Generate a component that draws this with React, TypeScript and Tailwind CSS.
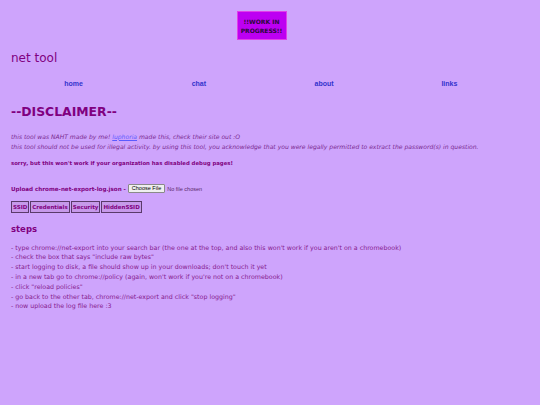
export default function App() {
  const steps = [
    "- type chrome://net-export into your search bar (the one at the top, and also this won't work if you aren't on a chromebook)",
    '- check the box that says "include raw bytes"',
    "- start logging to disk, a file should show up in your downloads; don't touch it yet",
    "- in a new tab go to chrome://policy (again, won't work if you're not on a chromebook)",
    '- click "reload policies"',
    '- go back to the other tab, chrome://net-export and click "stop logging"',
    "- now upload the log file here :3",
  ];
  const tabs = ["SSID", "Credentials", "Security", "HiddenSSID"];

  return (
    <div
      className="h-[405px] w-[540px] overflow-hidden bg-[#cea4fc] px-[11px] text-[#800080]"
      style={{ fontFamily: '"Comic Sans MS", "DejaVu Sans", sans-serif' }}
    >
      {/* work in progress badge */}
      <div className="flex w-[501px] justify-center pt-[11px]">
        <div className="flex h-[29px] w-[50px] flex-col items-center justify-center border border-[#e040e8] bg-[#bd00f2] text-[6px] font-bold leading-[9px] text-[#2a0a3a]">
          <span>!!WORK IN</span>
          <span>PROGRESS!!</span>
        </div>
      </div>

      <h1 className="mt-[11px] text-[12px] leading-[14px]">net tool</h1>

      {/* nav */}
      <nav
        className="mt-[13.5px] grid w-[501px] grid-cols-4 text-center text-[7px] font-bold leading-[9px] text-[#3333cc]"
        style={{ fontFamily: '"Liberation Sans", Arial, sans-serif' }}
      >
        <a>home</a>
        <a>chat</a>
        <a>about</a>
        <a>links</a>
      </nav>

      <h1 className="mt-[15px] text-[12.4px] font-bold leading-[18px]">--DISCLAIMER--</h1>

      <p className="mt-[11px] text-[6.05px] italic leading-[10px] text-[#7a2a90]">
        this tool was NAHT made by me!{" "}
        <a className="text-[#5b5bff] underline">luphoria</a> made this, check their site out :O
        <br />
        this tool should not be used for illegal activity. by using this tool, you acknowledge that you were legally
        permitted to extract the password(s) in question.
      </p>

      <p className="mt-[6px] text-[5.35px] font-bold leading-[10px]">
        sorry, but this won't work if your organization has disabled debug pages!
      </p>

      <div className="mt-[16px] flex h-[10px] items-center text-[5.6px] font-bold leading-[10px]">
        <span>Upload chrome-net-export-log.json -&nbsp;</span>
        <span
          className="flex items-center text-[5.5px] font-normal text-[#5a2a6a]"
          style={{ fontFamily: '"Liberation Sans", Arial, sans-serif' }}
        >
          <span className="rounded-[1px] border border-[#8a8a8a] bg-[#efefef] px-[3px] leading-[7px] text-black">
            Choose File
          </span>
          <span className="ml-[2px]">No file chosen</span>
        </span>
      </div>

      <div className="mt-[7px] flex gap-[1px]">
        {tabs.map((t) => (
          <button
            key={t}
            className="h-[12px] border border-[#5a3a6a] bg-[#c699ea] px-[1px] text-[5.5px] font-bold leading-[10px] text-[#800080]"
          >
            {t}
          </button>
        ))}
      </div>

      <h2 className="mt-[10px] text-[8.5px] font-bold leading-[12px]">steps</h2>

      <div className="mt-[8px] text-[6.3px] leading-[9.83px] text-[#86208e]">
        {steps.map((s) => (
          <div key={s} className="whitespace-nowrap">
            {s}
          </div>
        ))}
      </div>
    </div>
  );
}
